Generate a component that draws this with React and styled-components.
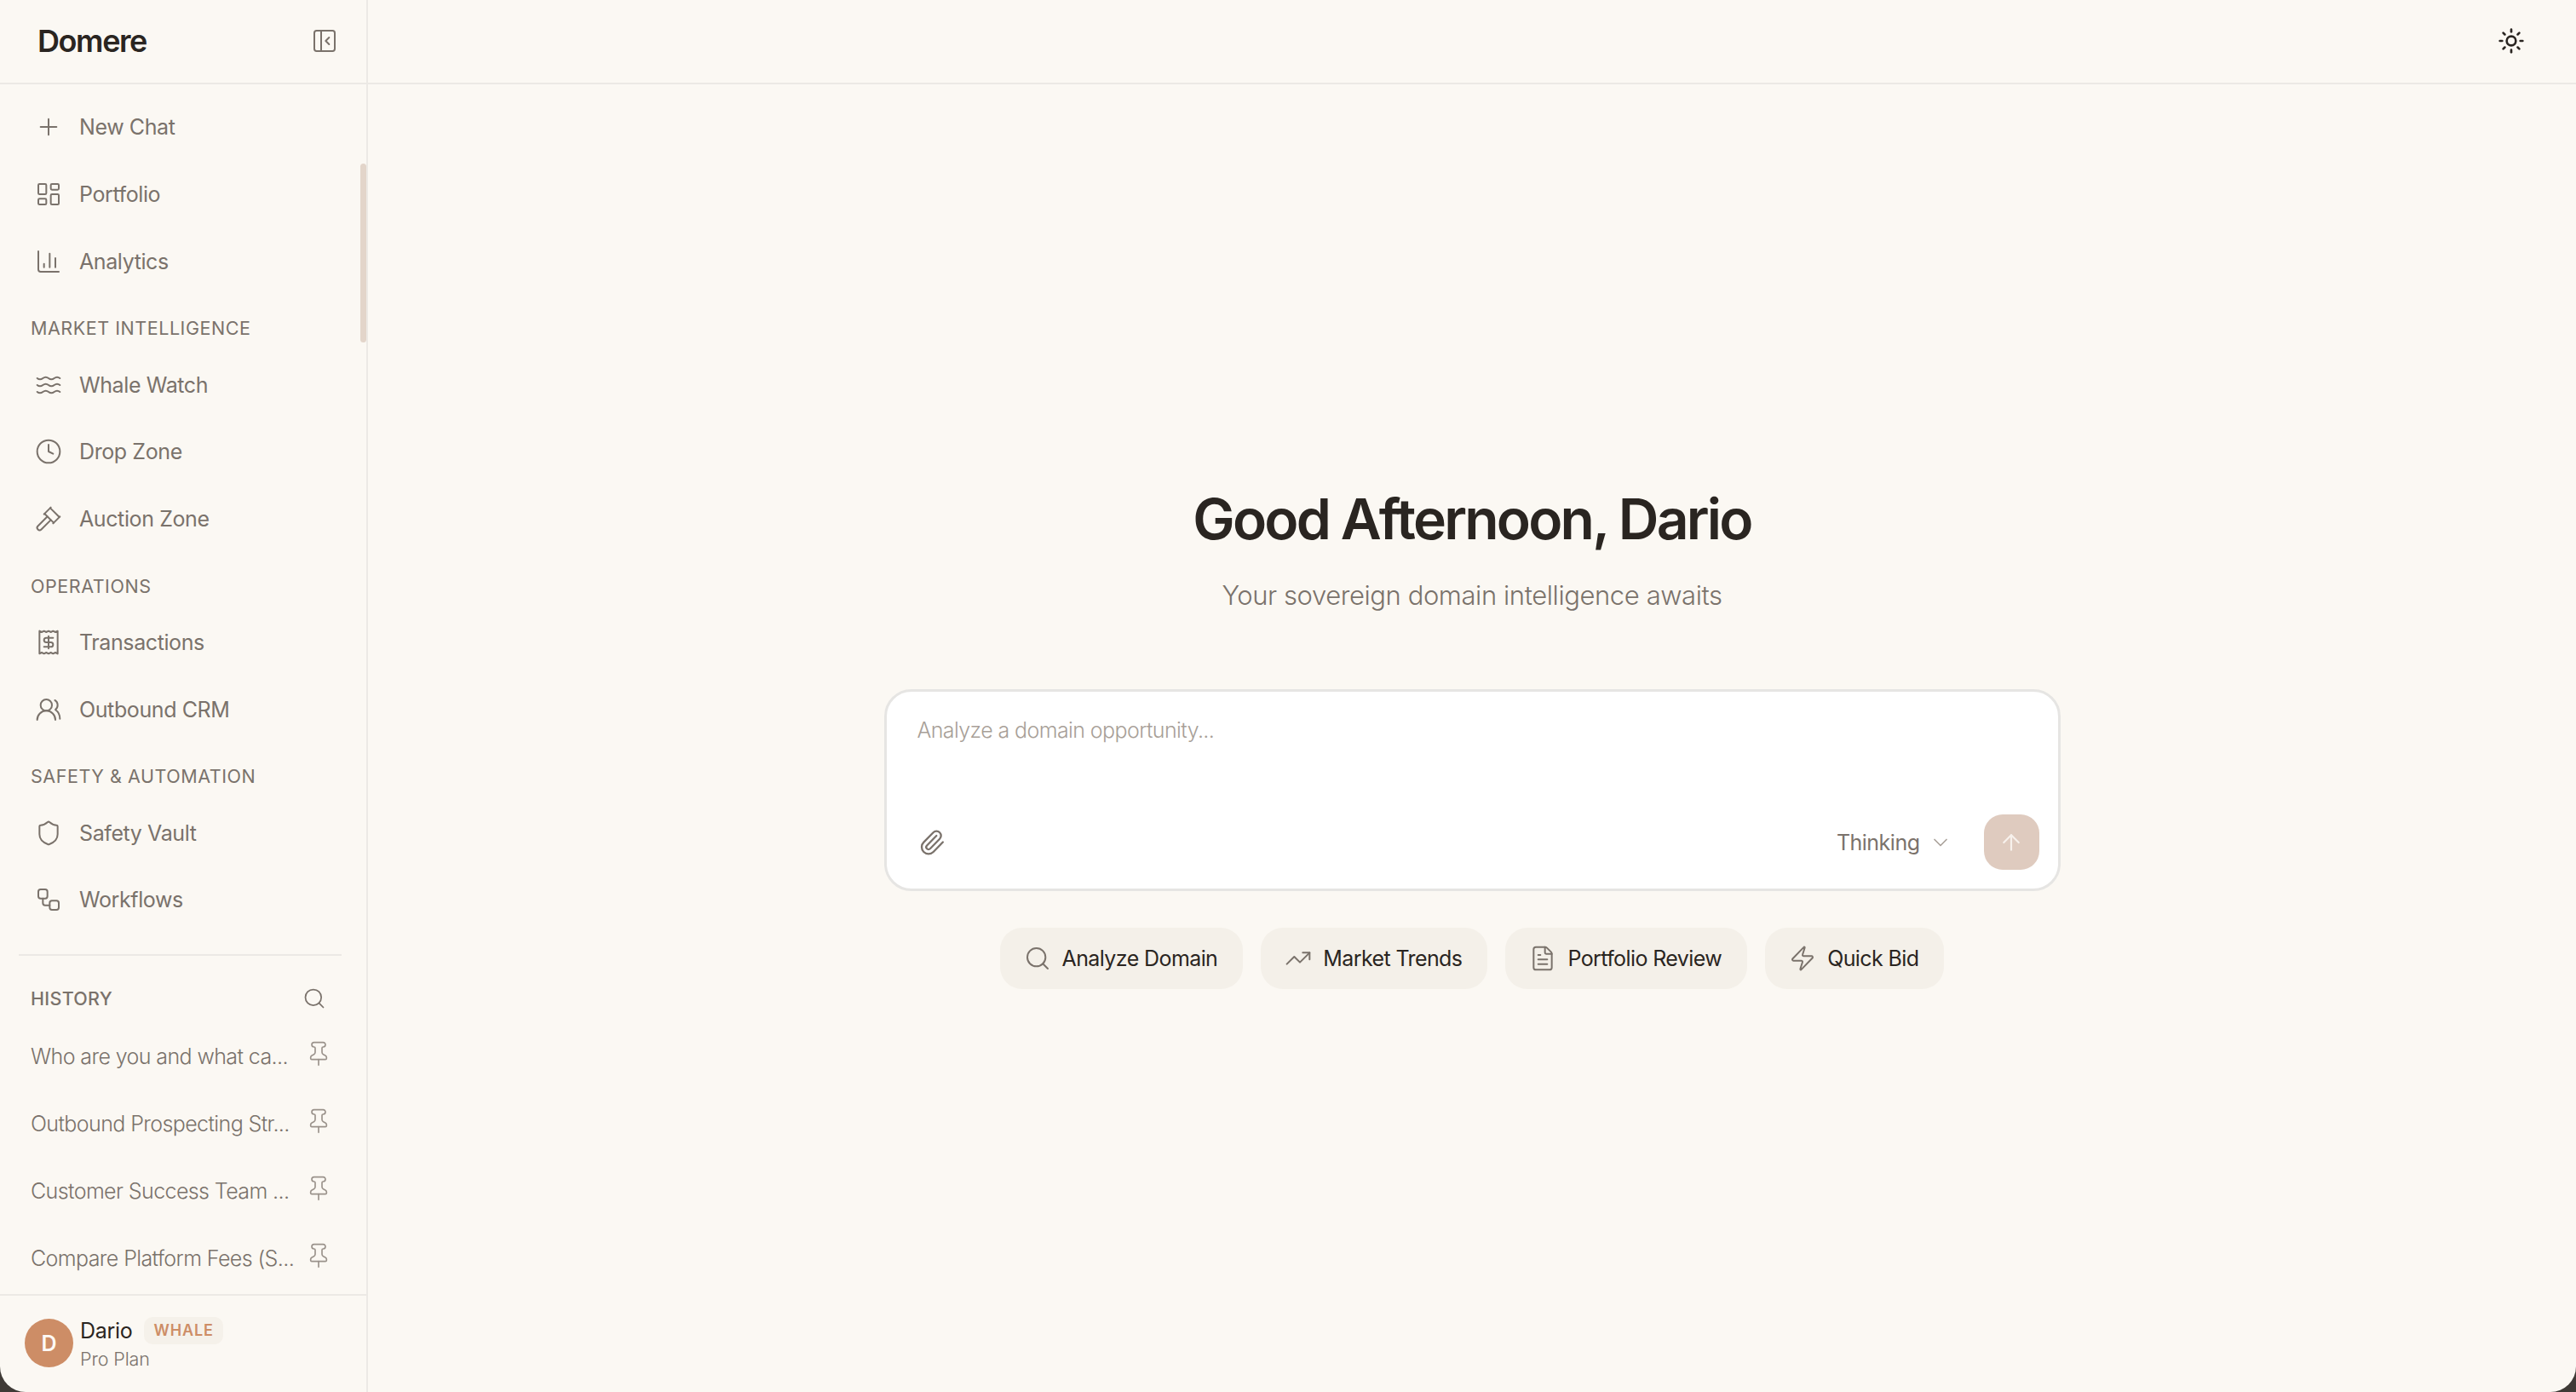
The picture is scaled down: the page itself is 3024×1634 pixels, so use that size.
import React from "react";
import styled, { createGlobalStyle } from "styled-components";
import {
  Plus, LayoutDashboard, ChartColumn, Waves, Clock, Gavel, Receipt, UsersRound, Shield, Workflow,
  Search, Pin, PanelLeftClose, Sun, Paperclip, ChevronDown, ArrowUp, TrendingUp, FileText, Zap,
} from "lucide-react";

const Global = createGlobalStyle`
  html, body { margin: 0; height: 100%; overflow: hidden; background: #3f3a36; }
  #root { height: 100%; }
  * { box-sizing: border-box; }
  body { font-family: Inter, "Liberation Sans", sans-serif; }
`;

const Shell = styled.div`
  display: flex; width: 3024px; height: 1634px; background: #fbf8f3;
  border-radius: 0 0 30px 30px; overflow: hidden; color: #2a2521;
`;
const Sidebar = styled.aside`
  width: 432px; flex: none; display: flex; flex-direction: column; border-right: 2px solid #ece9e5;
`;
const Brand = styled.div`
  height: 99px; flex: none; display: flex; align-items: center; justify-content: space-between;
  padding: 0 33px 2px 44px; border-bottom: 2px solid #ece9e5;
`;
const Logo = styled.div`
  font-size: 36px; font-weight: 600; letter-spacing: -1.4px; color: #2a2521;
`;
const Scroller = styled.div`
  flex: 1; min-height: 0; position: relative; overflow: hidden; padding-top: 11px;
`;
const Thumb = styled.div`
  position: absolute; top: 93px; right: 0; width: 7px; height: 210px; border-radius: 4px; background: #e3d5ca;
`;
const NavItem = styled.div`
  height: 78.7px; margin: 0 22px; padding-left: 19px; display: flex; align-items: center; gap: 20px;
  font-size: 25px; font-weight: 400; letter-spacing: -0.4px; color: #7a726b;
  svg { flex: none; }
`;
const SectionLabel = styled.div`
  height: 66.3px; padding: 12px 0 0 36px; display: flex; align-items: center;
  font-size: 21.5px; font-weight: 400; letter-spacing: 0.55px; color: #7a726b;
`;
const Divider = styled.div`
  height: 2px; margin: 24px 29px 0 22px; background: #ece9e5;
`;
const HistoryHead = styled.div`
  display: flex; align-items: center; justify-content: space-between; height: 50px;
  margin-top: 25px; padding: 0 47px 0 36px;
  font-size: 21.5px; font-weight: 500; letter-spacing: 0.3px; color: #7a726b;
`;
const HistoryList = styled.div`
  margin-top: 4px;
`;
const HistoryRow = styled.div`
  height: 79px; display: flex; align-items: center; justify-content: space-between; padding: 0 40px 0 36px;
  font-size: 25px; font-weight: 300; letter-spacing: -0.6px; color: #7a726b; white-space: nowrap;
  svg { flex: none; color: #9a928b; margin-top: -6px; }
`;
const Footer = styled.div`
  height: 115px; flex: none; display: flex; align-items: center; gap: 8px; padding: 0 0 2px 29px;
  border-top: 2px solid #ece9e5;
`;
const Avatar = styled.div`
  width: 57px; height: 57px; border-radius: 50%; background: #cd8d66; color: #fdf9f5;
  display: flex; align-items: center; justify-content: center; font-size: 25px; font-weight: 600;
`;
const UserInfo = styled.div`
  display: flex; flex-direction: column; margin-top: 2px;
`;
const NameLine = styled.div`
  display: flex; align-items: center; gap: 14px; height: 34px; font-size: 25px; font-weight: 400; letter-spacing: -0.3px; color: #2a2521;
`;
const Badge = styled.span`
  height: 32px; padding: 0 11px; border-radius: 10px; background: #f5f1ea; color: #cd8d66;
  display: flex; align-items: center; font-size: 18px; font-weight: 600; letter-spacing: 0.9px;
`;
const Plan = styled.div`
  height: 32px; display: flex; align-items: center; font-size: 21.5px; font-weight: 300; letter-spacing: -0.1px; color: #7a726b;
`;
const Main = styled.main`
  flex: 1; min-width: 0; display: flex; flex-direction: column;
`;
const TopBar = styled.div`
  height: 99px; flex: none; display: flex; align-items: center; justify-content: flex-end;
  padding: 0 60px 2px 0; border-bottom: 2px solid #ece9e5; color: #2a2521;
`;
const Center = styled.div`
  flex: 1; display: flex; flex-direction: column; align-items: center; padding-top: 470px;
`;
const Title = styled.h1`
  margin: 0; font-size: 66px; line-height: 80px; font-weight: 600; letter-spacing: -2.8px; color: #2a2521;
`;
const Subtitle = styled.p`
  margin: 28px 0 0; font-size: 31px; line-height: 44px; font-weight: 300; letter-spacing: -0.42px; color: #7a726b;
`;
const Composer = styled.div`
  width: 1381px; height: 237px; margin-top: 88px; background: #fff; border: 3px solid #e6e5e3; border-radius: 32px;
  display: flex; flex-direction: column; justify-content: space-between; padding: 28px 22px 22px 36px;
`;
const Placeholder = styled.div`
  font-size: 25px; line-height: 34px; font-weight: 300; letter-spacing: -0.6px; color: #a89f98;
`;
const ComposerBar = styled.div`
  display: flex; align-items: center; justify-content: space-between;
`;
const AttachIcon = styled.span`
  display: flex; color: #7a726b; margin-left: 1px;
`;
const ComposerRight = styled.div`
  display: flex; align-items: center;
`;
const ModelLabel = styled.span`
  font-size: 25px; font-weight: 400; letter-spacing: -0.5px; color: #7a726b;
`;
const ModelChevron = styled.span`
  display: flex; color: #aba39c; margin: 0 37px 0 10px;
`;
const SendButton = styled.div`
  width: 65px; height: 65px; border-radius: 22px; background: #dfcbbf; color: #f7f1ec;
  display: flex; align-items: center; justify-content: center;
`;
const Chips = styled.div`
  display: flex; gap: 21px; margin-top: 43px;
`;
const Chip = styled.div`
  height: 72px; padding: 0 30px 0 28px; border-radius: 26px; background: #f4f0e9;
  display: flex; align-items: center; gap: 13px; font-size: 25px; font-weight: 400; letter-spacing: -0.6px; color: #2a2521;
  svg { color: #7a726b; flex: none; }
`;

const icon = { size: 32, strokeWidth: 1.5 };

const Nav = ({ I, children }) => <NavItem><I {...icon} />{children}</NavItem>;

const history = [
  "Who are you and what ca...",
  "Outbound Prospecting Str...",
  "Customer Success Team ...",
  "Compare Platform Fees (S...",
];

export default function App() {
  return (
    <Shell>
      <Global />
      <Sidebar>
        <Brand>
          <Logo>Domere</Logo>
          <PanelLeftClose size={32} strokeWidth={1.5} color="#7a726b" />
        </Brand>
        <Scroller>
          <Thumb />
          <Nav I={Plus}>New Chat</Nav>
          <Nav I={LayoutDashboard}>Portfolio</Nav>
          <Nav I={ChartColumn}>Analytics</Nav>
          <SectionLabel>MARKET INTELLIGENCE</SectionLabel>
          <Nav I={Waves}>Whale Watch</Nav>
          <Nav I={Clock}>Drop Zone</Nav>
          <Nav I={Gavel}>Auction Zone</Nav>
          <SectionLabel>OPERATIONS</SectionLabel>
          <Nav I={Receipt}>Transactions</Nav>
          <Nav I={UsersRound}>Outbound CRM</Nav>
          <SectionLabel>SAFETY &amp; AUTOMATION</SectionLabel>
          <Nav I={Shield}>Safety Vault</Nav>
          <Nav I={Workflow}>Workflows</Nav>
          <Divider />
          <HistoryHead>
            HISTORY
            <Search size={28} strokeWidth={1.5} color="#7a726b" />
          </HistoryHead>
          <HistoryList>
            {history.map((t) => (
              <HistoryRow key={t}>
                {t}
                <Pin size={32} strokeWidth={1.25} />
              </HistoryRow>
            ))}
          </HistoryList>
        </Scroller>
        <Footer>
          <Avatar>D</Avatar>
          <UserInfo>
            <NameLine>Dario<Badge>WHALE</Badge></NameLine>
            <Plan>Pro Plan</Plan>
          </UserInfo>
        </Footer>
      </Sidebar>
      <Main>
        <TopBar><Sun size={32} strokeWidth={2} /></TopBar>
        <Center>
          <Title>Good Afternoon, Dario</Title>
          <Subtitle>Your sovereign domain intelligence awaits</Subtitle>
          <Composer>
            <Placeholder>Analyze a domain opportunity...</Placeholder>
            <ComposerBar>
              <AttachIcon><Paperclip size={32} strokeWidth={1.75} /></AttachIcon>
              <ComposerRight>
                <ModelLabel>Thinking</ModelLabel>
                <ModelChevron><ChevronDown size={28} strokeWidth={1.5} /></ModelChevron>
                <SendButton><ArrowUp size={30} strokeWidth={1.75} /></SendButton>
              </ComposerRight>
            </ComposerBar>
          </Composer>
          <Chips>
            <Chip><Search {...icon} />Analyze Domain</Chip>
            <Chip><TrendingUp {...icon} />Market Trends</Chip>
            <Chip><FileText {...icon} />Portfolio Review</Chip>
            <Chip><Zap {...icon} />Quick Bid</Chip>
          </Chips>
        </Center>
      </Main>
    </Shell>
  );
}
